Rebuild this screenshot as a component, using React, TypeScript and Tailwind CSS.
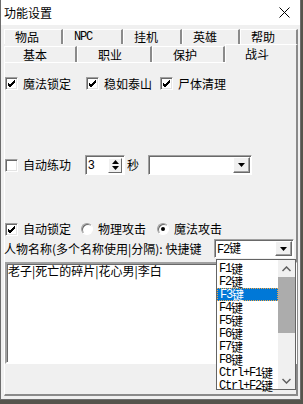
import React from "react"

const mono = "font-['Liberation_Mono','Noto_Sans_CJK_SC',monospace] tracking-[-1.2px]"

function Check({ on }: { on?: boolean }) {
  return (
    <span className="flex h-[13px] w-[13px] shrink-0 items-center justify-center border border-t-[#a0a0a0] border-l-[#a0a0a0] border-b-white border-r-white bg-white shadow-[inset_1px_1px_0_#696969,inset_-1px_-1px_0_#e3e3e3]">
      {on && (
        <svg width="9" height="9" viewBox="0 0 9 9">
          <path d="M1 4 L3 6 L8 1 M1 5 L3 7 L8 2 M1 6 L3 8 L8 3" stroke="#000" strokeWidth="1" fill="none" />
        </svg>
      )}
    </span>
  )
}

function Radio({ on }: { on?: boolean }) {
  return (
    <span className="flex h-[12px] w-[12px] shrink-0 items-center justify-center rounded-full border border-t-[#a0a0a0] border-l-[#a0a0a0] border-b-white border-r-white bg-white shadow-[inset_1px_1px_0_#696969]">
      {on && <span className="h-[4px] w-[4px] rounded-full bg-black" />}
    </span>
  )
}

function Arrow({ up }: { up?: boolean }) {
  return (
    <svg width="7" height="4" viewBox="0 0 7 4">
      <path d={up ? "M3.5 0 L7 4 L0 4 Z" : "M0 0 L7 0 L3.5 4 Z"} fill="#000" />
    </svg>
  )
}

function DropBtn() {
  return (
    <span className="flex h-full w-[17px] items-center justify-center border border-t-white border-l-white border-b-[#696969] border-r-[#696969] bg-[#f0f0f0] shadow-[inset_-1px_-1px_0_#a0a0a0]">
      <Arrow />
    </span>
  )
}

function Key({ k, selected }: { k: string; selected?: boolean }) {
  return (
    <div
      className={`flex h-[13px] items-center pl-[2px] text-[12px] leading-none ${
        selected ? "border border-dotted border-[#f5a742] bg-[#0078d7] pl-[1px] text-white" : "text-black"
      }`}
    >
      <span className={mono}>{k}</span>
      <span>键</span>
    </div>
  )
}

const keys = ["F1", "F2", "F3", "F4", "F5", "F6", "F7", "F8", "Ctrl+F1", "Ctrl+F2"]

export default function App() {
  const back = [
    { t: "物品", w: 59 },
    { t: "NPC", w: 60, m: true },
    { t: "挂机", w: 59 },
    { t: "英雄", w: 58 },
    { t: "帮助", w: 58 },
  ]
  const front = [
    { t: "基本", w: 73, p: 18 },
    { t: "职业", w: 75, p: 20 },
    { t: "保护", w: 73, p: 20 },
  ]

  return (
    <div className="h-[404px] w-[303px] overflow-hidden bg-[#55544c] font-['Noto_Sans_CJK_SC','Noto_Sans',sans-serif] text-[12px] text-black">
      <div className="relative flex h-[400px] w-[301px] flex-col border-x border-b border-[#6d6d6d] bg-[#f0f0f0]">
        {/* title bar */}
        <div className="flex h-[25px] items-center justify-between bg-white pl-[3px] pr-[10px]">
          <span className="text-[12px] leading-none">功能设置</span>
          <svg width="11" height="11" viewBox="0 0 11 11">
            <path d="M0.5 0.5 L10.5 10.5 M10.5 0.5 L0.5 10.5" stroke="#000" strokeWidth="1" />
          </svg>
        </div>

        {/* tabs back row */}
        <div className="ml-[3px] mt-[4px] flex h-[15px]">
          {back.map((b) => (
            <div
              key={b.t}
              style={{ width: b.w }}
              className="flex h-full items-center border-t border-l border-white border-r-2 border-r-[#8a8a8a] pl-[10px] leading-none"
            >
              {b.m ? <span className={`${mono} text-[12px]`}>NPC</span> : b.t}
            </div>
          ))}
        </div>

        {/* tabs front row */}
        <div className="ml-[3px] flex h-[18px] items-end">
          {front.map((f) => (
            <div
              key={f.t}
              style={{ width: f.w, paddingLeft: f.p }}
              className="flex h-[16px] items-center border-t border-l border-white border-r-2 border-r-[#8a8a8a] leading-none"
            >
              {f.t}
            </div>
          ))}
          <div className="relative z-10 -mb-[1px] flex h-[19px] w-[73px] items-start border-t border-l border-white border-r-2 border-r-[#8a8a8a] bg-[#f0f0f0] pl-[19px] pt-[3px] leading-none">
            战斗
          </div>
        </div>

        {/* panel */}
        <div className="ml-[3px] flex h-[334px] w-[294px] flex-col border-t border-l border-white border-r-2 border-b-2 border-r-[#8a8a8a] border-b-[#8a8a8a]">
          <div className="mt-[14px] flex h-[13px] items-center">
            <Check on />
            <span className="ml-[5px] mr-[15px] leading-none">魔法锁定</span>
            <Check on />
            <span className="ml-[5px] mr-[8px] leading-none">稳如泰山</span>
            <Check on />
            <span className="ml-[5px] leading-none">尸体清理</span>
          </div>

          <div className="mt-[65px] flex h-[20px] items-center">
            <Check />
            <span className="ml-[5px] leading-none">自动练功</span>
            <div className="ml-[14px] flex h-[20px] w-[40px] items-center border border-t-[#a0a0a0] border-l-[#a0a0a0] border-b-white border-r-white bg-white shadow-[inset_1px_1px_0_#696969]">
              <span className="ml-[2px] flex-1 font-['Liberation_Sans',sans-serif] text-[12px] leading-none">3</span>
              <div className="mr-[2px] flex h-[15px] w-[14px] flex-col border border-t-white border-l-white border-b-[#696969] border-r-[#696969] bg-[#f0f0f0]">
                <div className="flex flex-1 items-center justify-center"><Arrow up /></div>
                <div className="flex flex-1 items-center justify-center"><Arrow /></div>
              </div>
            </div>
            <span className="ml-[2px] leading-none">秒</span>
            <div className="ml-[9px] flex h-[20px] w-[104px] items-center justify-end border border-t-[#a0a0a0] border-l-[#a0a0a0] border-b-white border-r-white bg-white p-[1px] shadow-[inset_1px_1px_0_#696969]">
              <DropBtn />
            </div>
          </div>

          <div className="mt-[47px] flex h-[14px] items-center">
            <Check on />
            <span className="ml-[5px] leading-none">自动锁定</span>
            <span className="ml-[10px]"><Radio /></span>
            <span className="ml-[5px] leading-none">物理攻击</span>
            <span className="ml-[11px]"><Radio on /></span>
            <span className="ml-[5px] leading-none">魔法攻击</span>
          </div>

          <div className="mt-[3px] flex h-[19px] items-center">
            <span className="-ml-[1px] leading-none">人物名称(多个名称使用|分隔): 快捷键</span>
            <div className="ml-auto mr-[2px] flex h-[19px] w-[80px] items-center border border-t-[#a0a0a0] border-l-[#a0a0a0] border-b-white border-r-white bg-white p-[1px] shadow-[inset_1px_1px_0_#696969]">
              <span className="flex-1 pl-[1px] leading-none">
                <span className={mono}>F2</span>键
              </span>
              <DropBtn />
            </div>
          </div>

          <div className="mt-[4px] h-[102px] w-[292px] border-2 border-t-[#a0a0a0] border-l-[#a0a0a0] border-b-white border-r-white bg-white pl-[1px] pt-[1px] shadow-[inset_1px_1px_0_#696969] leading-none">
            老子|死亡的碎片|花心男|李白
          </div>
        </div>

        {/* open dropdown list */}
        <div className="absolute left-[215px] top-[259px] z-20 flex h-[131px] w-[80px] border border-[#646464] bg-white">
          <div className="flex-1 pt-[2px]">
            {keys.map((k) => (
              <Key key={k} k={k} selected={k === "F3"} />
            ))}
          </div>
          <div className="flex w-[17px] flex-col bg-[#f0f0f0]">
            <div className="flex h-[17px] items-center justify-center">
              <svg width="9" height="6" viewBox="0 0 9 6">
                <path d="M0.5 5 L4.5 1 L8.5 5" stroke="#606060" strokeWidth="1.5" fill="none" />
              </svg>
            </div>
            <div className="h-[56px] bg-[#acacac]" />
            <div className="flex-1" />
            <div className="flex h-[17px] items-center justify-center">
              <svg width="9" height="6" viewBox="0 0 9 6">
                <path d="M0.5 1 L4.5 5 L8.5 1" stroke="#606060" strokeWidth="1.5" fill="none" />
              </svg>
            </div>
          </div>
        </div>
      </div>
    </div>
  )
}
